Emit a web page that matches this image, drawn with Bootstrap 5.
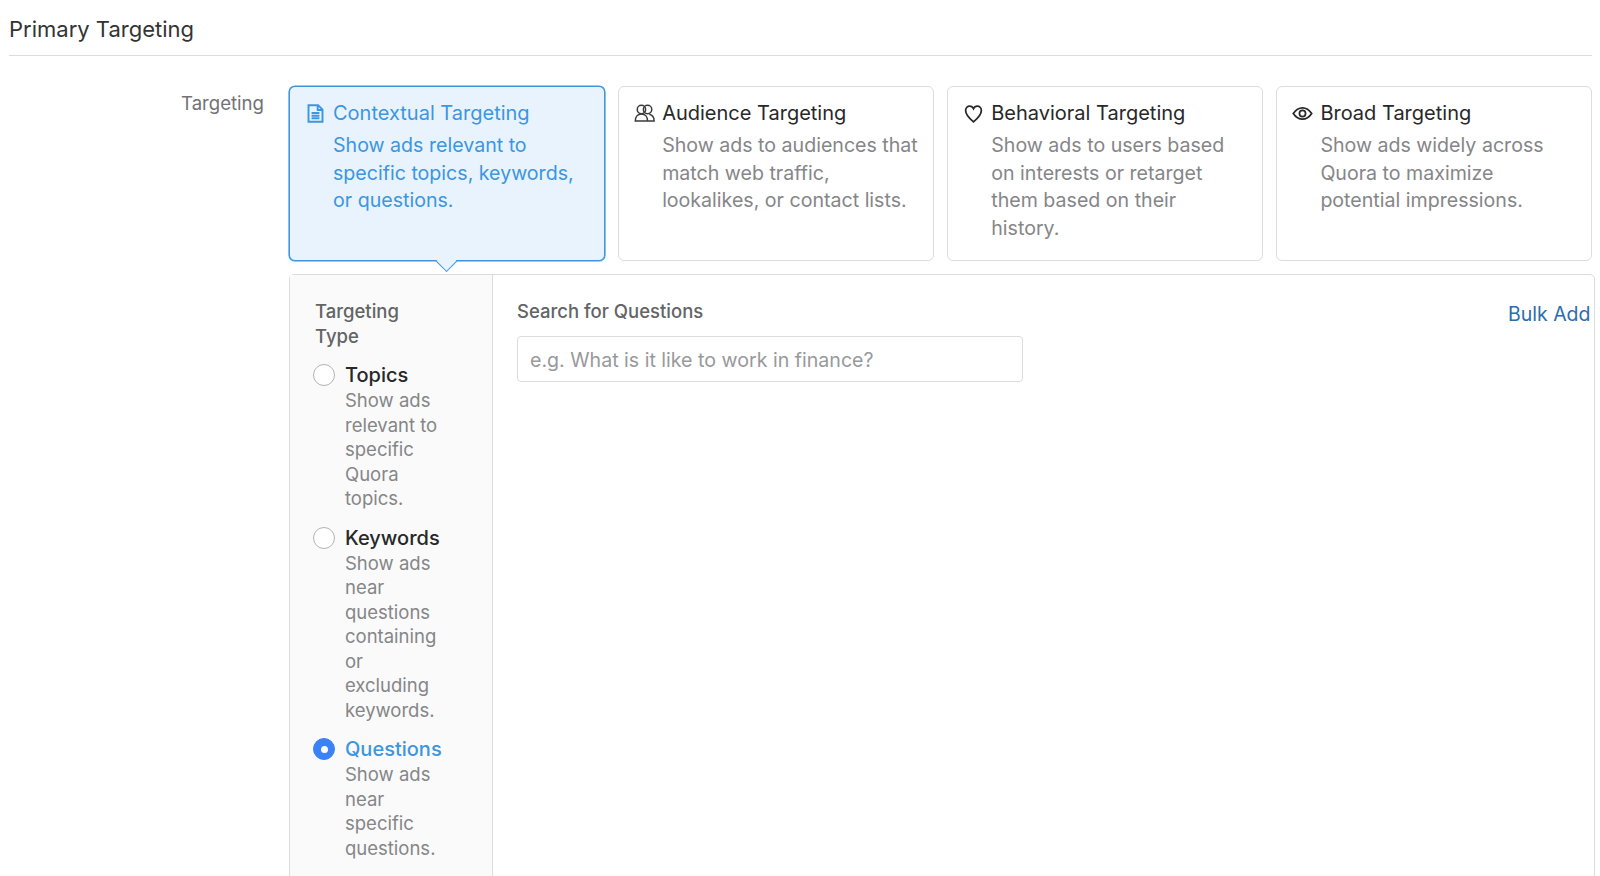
<!DOCTYPE html>
<html lang="en"><head><meta charset="utf-8">
<link href="https://cdn.jsdelivr.net/npm/bootstrap@5.3.0/dist/css/bootstrap.min.css" rel="stylesheet">
<style>
html,body{height:876px;overflow:hidden;background:#fff}
body{font-family:"Inter","Liberation Sans",sans-serif;font-size:19px;color:#282829}
.page-wrap{padding:0 5px 0 9px}
.sec-title{font-size:22px;line-height:28px;padding:15px 0 12px;border-bottom:1px solid #dcdcdc;color:#333;margin-bottom:30px;width:1583px}
.lbl-col{width:255px;text-align:right;color:#717274;font-size:18.6px;line-height:24px;padding-top:5px;flex:none}
.main-col{margin-left:25px;flex:1;min-width:0}
.opts{display:grid;grid-template-columns:repeat(4,1fr);gap:13.5px;width:1303px}
.opt{border:1px solid #dcdcdc;border-radius:6px;height:175px;padding:14px 0 0 15px;position:relative}
.opt-h{display:flex;align-items:center;gap:7px;font-size:20px;line-height:24px;color:#282829;margin-bottom:7px}
.opt-h svg{width:21px;height:21px;flex:none}
.opt-d{margin-left:28px;width:256px;font-size:19.6px;line-height:27.5px;color:#858688}
.opt.on{background:#e8f3fd;border-color:#3f94dc;box-shadow:0 0 0 .6px #3f94dc}
.opt.on .opt-h,.opt.on .opt-d{color:#3c96e0}
.opt.on:after{content:"";position:absolute;left:50%;bottom:-8.5px;width:15px;height:15px;margin-left:-7.5px;background:#e8f3fd;border-right:1px solid #3f94dc;border-bottom:1px solid #3f94dc;transform:rotate(45deg)}
.panel{margin-top:13px;width:1306px;height:640px;border:1px solid #dcdcdc;border-radius:5px 5px 0 0;display:flex}
.side{width:202.500px;background:#fafafa;border-right:1px solid #dcdcdc;padding:24px 18px 0 25px;flex:none}
.side-t{font-size:18.500px;line-height:24.500px;color:#636466;width:100px;margin-bottom:15px;font-weight:500}
.rad{display:flex;gap:10px;margin-bottom:15px;margin-left:-2px}
.rad-c{width:22px;height:22px;border-radius:50%;border:1px solid #b1b3b6;background:#fff;flex:none;margin-top:1px}
.rad-c.on{background:#3a82f6;border-color:#3a82f6;display:flex;align-items:center;justify-content:center}
.rad-c.on:after{content:"";width:7px;height:7px;background:#fff;border-radius:50%}
.rad-t{font-size:20px;line-height:24px;color:#282829;margin-bottom:1px;font-weight:500}
.rad-t.on{color:#3c96e0}
.rad-d{font-size:18.500px;line-height:24.500px;color:#858688;width:96px}
.body-p{flex:1;padding:24px 3.500px 0 24.500px;display:flex;justify-content:space-between;align-items:flex-start}
.q-l{font-size:18.500px;line-height:24px;color:#636466;margin-bottom:13px;font-weight:500}
.q-i{width:506px;height:46px;border:1px solid #dcdcdc;border-radius:4px;padding:3px 12px 0;font-size:19.600px;color:#98999b;display:flex;align-items:center}
.bulk{color:#2b6dad;font-size:19.500px;line-height:28px;padding-top:1px}
</style></head><body>
<div class="page-wrap">
<div class="sec-title">Primary Targeting</div>
<div class="d-flex">
<div class="lbl-col">Targeting</div>
<div class="main-col">
<div class="opts">
<div class="opt on"><div class="opt-h"><svg viewBox="0 0 24 24" fill="none" stroke="currentColor" stroke-width="2.200"><path d="M4 2.500h11l5 5v14H4zM7.500 11.500h9M7.500 14.500h9M7.500 17.500h9M14.500 2.500V8H20"/></svg>Contextual Targeting</div><div class="opt-d">Show ads relevant to specific topics, keywords, or questions.</div></div>
<div class="opt"><div class="opt-h"><svg viewBox="0 0 24 24" fill="none" stroke="#3a3a3b" stroke-width="1.700"><circle cx="8.500" cy="7.500" r="4.800"/><circle cx="15.500" cy="7.500" r="4.800"/><path d="M1.500 20.500c0-4.500 2.500-8 7-8s7 3.500 7 8zM17.500 12.800c3.300.7 5.500 3.500 5.500 7.700h-7.500"/></svg>Audience Targeting</div><div class="opt-d">Show ads to audiences that match web traffic, lookalikes, or contact lists.</div></div>
<div class="opt"><div class="opt-h"><svg viewBox="0 0 24 24" fill="none" stroke="currentColor" stroke-width="2"><path d="M12 21.500C6 16.500 3 13 3 8.500 3 5.500 5.200 3.500 7.700 3.500c2 0 3.400 1 4.300 3 .9-2 2.300-3 4.300-3 2.500 0 4.700 2 4.700 5 0 4.500-3 8-9 13z"/></svg>Behavioral Targeting</div><div class="opt-d">Show ads to users based on interests or retarget them based on their history.</div></div>
<div class="opt"><div class="opt-h"><svg viewBox="0 0 24 24" fill="none" stroke="currentColor" stroke-width="2"><path d="M1.500 12C4.500 7.500 8 5.500 12 5.500s7.500 2 10.500 6.500c-3 4.500-6.500 6.500-10.500 6.500S4.500 16.500 1.500 12z"/><circle cx="12" cy="12" r="3.500"/></svg>Broad Targeting</div><div class="opt-d">Show ads widely across Quora to maximize potential impressions.</div></div>
</div>
<div class="panel">
<div class="side">
<div class="side-t">Targeting Type</div>
<div class="rad"><div class="rad-c"></div><div><div class="rad-t">Topics</div><div class="rad-d">Show ads relevant to specific Quora topics.</div></div></div>
<div class="rad"><div class="rad-c"></div><div><div class="rad-t">Keywords</div><div class="rad-d">Show ads near questions containing or excluding keywords.</div></div></div>
<div class="rad"><div class="rad-c on"></div><div><div class="rad-t on">Questions</div><div class="rad-d">Show ads near specific questions.</div></div></div>
</div>
<div class="body-p">
<div><div class="q-l">Search for Questions</div><div class="q-i">e.g. What is it like to work in finance?</div></div>
<div class="bulk">Bulk Add</div>
</div>
</div>
</div>
</div>
</div>
</body></html>
